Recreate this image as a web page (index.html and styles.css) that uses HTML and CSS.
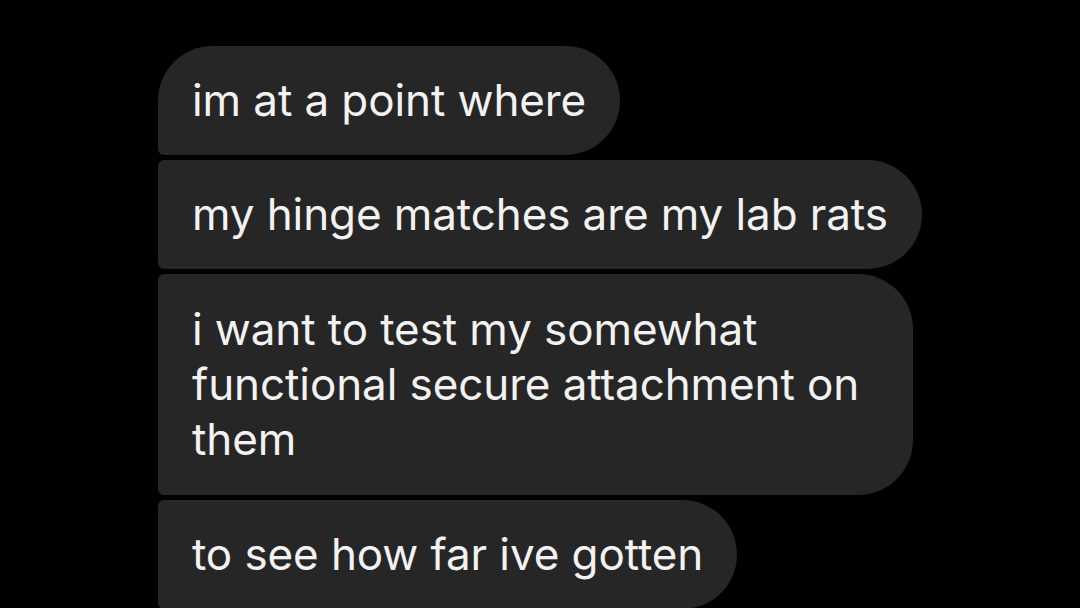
FILE: index.html
```html
<!DOCTYPE html>
<html lang="en">
<head>
<meta charset="utf-8">
<title>Messages</title>
<link rel="stylesheet" href="styles.css">
</head>
<body>
<main class="thread">
  <div class="bubble first single">im at a point where</div>
  <div class="bubble single">my hinge matches are my lab rats</div>
  <div class="bubble wrap">i want to test my somewhat functional secure attachment on them</div>
  <div class="bubble single">to see how far ive gotten</div>
</main>
</body>
</html>
```
FILE: styles.css
```css
html, body {
  margin: 0;
  padding: 0;
  background: #000;
  height: 100%;
  overflow: hidden;
}
.thread {
  display: flex;
  flex-direction: column;
  align-items: flex-start;
  gap: 5px;
  padding: 46px 0 0 158px;
}
.bubble {
  box-sizing: border-box;
  background: #262626;
  color: #f2f2f2;
  font-family: Inter, "Noto Sans", sans-serif;
  font-size: 44px;
  letter-spacing: -0.1px;
  line-height: 55px;
  padding: 27px 34px 27px 34px;
  border-radius: 6px 55px 55px 6px;
}
.bubble.single {
  white-space: nowrap;
}
.bubble.first {
  border-radius: 55px 55px 55px 6px;
}
.bubble.wrap {
  max-width: 755px;
  padding-top: 28px;
  padding-bottom: 28px;
}
```
